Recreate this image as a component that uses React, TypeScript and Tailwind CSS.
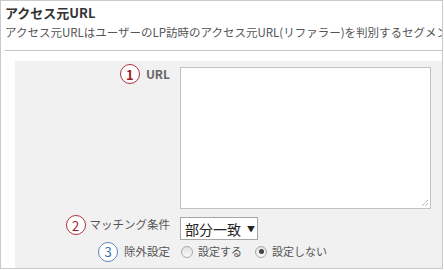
import React from "react";

const jp = { fontFamily: '"Noto Sans CJK JP", "Noto Sans", sans-serif' };

function Num({ n, color }: { n: string; color: "red" | "blue" }) {
  const cls =
    color === "red"
      ? "border-[#a8343c] text-[#9c1c24]"
      : "border-[#5d86b8] text-[#3f6fa8]";
  return (
    <div
      className={`w-[20px] h-[20px] rounded-full border-[1.5px] ${cls} bg-white flex items-center justify-center text-[13px] leading-none ${n === "1" ? "font-bold" : ""}`}
    >
      {n}
    </div>
  );
}

function Radio({ checked }: { checked?: boolean }) {
  return (
    <div className="w-[12px] h-[12px] rounded-full border border-[#a9a9a9] bg-gradient-to-b from-[#e2e2e2] to-[#f8f8f8] flex items-center justify-center">
      {checked && <div className="w-[5px] h-[5px] rounded-full bg-[#444]" />}
    </div>
  );
}

export default function App() {
  return (
    <div className="w-[444px] h-[270px] bg-white overflow-hidden" style={jp}>
      <div className="w-[443px] h-[269px] border border-[#c9c9c9] overflow-hidden flex flex-col">
        <div className="pl-[4px] pt-[3px]">
          <div className="text-[13px] font-bold text-[#333] leading-[18px]">アクセス元URL</div>
          <div className="text-[11.5px] text-[#555] leading-[18px] mt-[1px] whitespace-nowrap">
            アクセス元URLはユーザーのLP訪時のアクセス元URL(リファラー)を判別するセグメント
          </div>
        </div>
        <div className="ml-[4px] mt-[9px] h-px bg-[#c4c4c4]" />
        <div className="ml-[14px] mt-[10px] flex-1 bg-[#f1f1f1] flex flex-col">
          <div className="flex items-start">
            <div className="w-[155px] mt-[3px] flex items-center justify-end gap-[6px]">
              <Num n="1" color="red" />
              <span className="text-[12px] font-bold text-[#666]">URL</span>
            </div>
            <div className="ml-[10px] mt-[6px] w-[251px] h-[142px] border border-[#c2c2c2] bg-white relative">
              <svg className="absolute right-[1px] bottom-[1px]" width="9" height="9" viewBox="0 0 9 9">
                <path d="M8 2 L2 8 M8 5 L5 8" stroke="#8a8a8a" strokeWidth="1" strokeDasharray="1 1" />
              </svg>
            </div>
          </div>
          <div className="flex items-start mt-[8px]">
            <div className="w-[155px] mt-[-2px] flex items-center justify-end gap-[4px]">
              <Num n="2" color="red" />
              <span className="text-[11.5px] text-[#555]">マッチング条件</span>
            </div>
            <div className="ml-[10px] w-[78px] h-[23px] border border-[#a6a6a6] bg-white flex items-center pl-[4px] gap-[6px]">
              <span className="text-[14px] text-[#222] leading-none">部分一致</span>
              <span className="text-[8px] text-[#222] leading-none">▼</span>
            </div>
          </div>
          <div className="flex items-center mt-[2px] h-[19px]">
            <div className="w-[155px] flex items-center justify-end gap-[6px]">
              <Num n="3" color="blue" />
              <span className="text-[11.5px] text-[#555]">除外設定</span>
            </div>
            <div className="ml-[11px] flex items-center text-[11px] text-[#555]">
              <Radio />
              <span className="ml-[5px]">設定する</span>
              <div className="ml-[13px]"><Radio checked /></div>
              <span className="ml-[5px]">設定しない</span>
            </div>
          </div>
        </div>
      </div>
    </div>
  );
}
